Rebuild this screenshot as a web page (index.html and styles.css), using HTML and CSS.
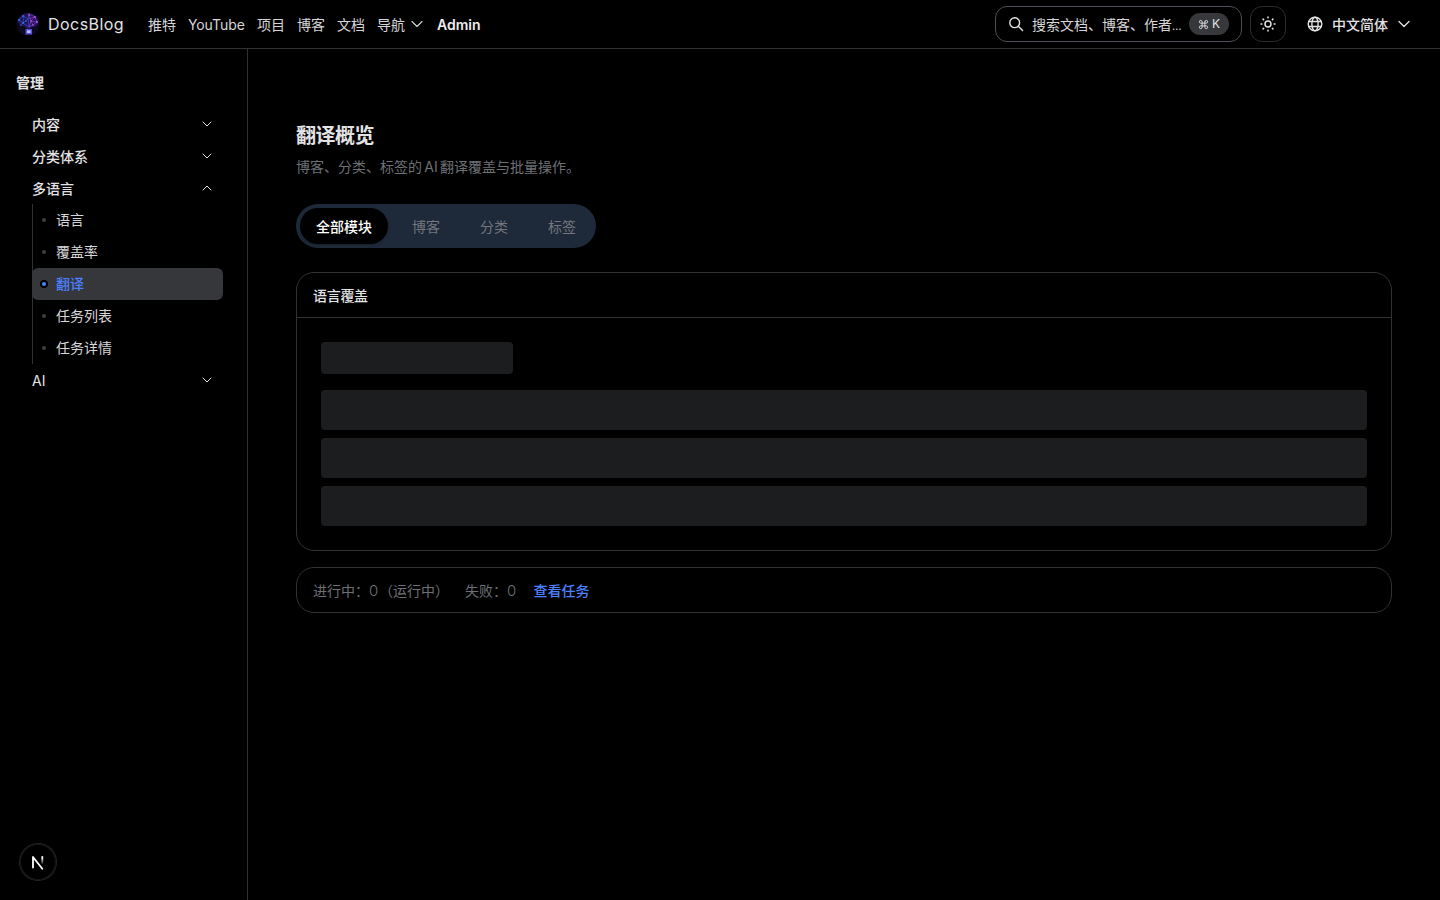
FILE: index.html
```html
<!DOCTYPE html>
<html lang="zh-CN">
<head>
  <meta charset="UTF-8">
  <title>翻译概览 - DocsBlog</title>
  <link rel="stylesheet" href="styles.css">
</head>
<body>
  <header class="navbar">
    <a class="brand">
      <svg class="logo" viewBox="0 0 24 24">
        <circle cx="12" cy="12" r="11.5" fill="#0d0a20"/>
        <path d="M2 9c0-3 3-5 5-6 2-2 5-2 6-1 3-1 6 1 7 3 2 1 3 4 2 6 0 3-3 4-5 4-2 1-3 1-4 2h-2c-1-2-2-2-4-3-3 0-5-2-5-5z" fill="#20155a"/>
        <path d="M3 8l4-4 5 3 1-5M3 8l4 3 5-4 1 8M7 11l1-7M7 11l6 4" fill="none" stroke="#2c51c8" stroke-width=".7"/>
        <path d="M13 2l6 3 2 5-4 3-4 2 2-6 6 1M12 7l7-2-4 4-2-7M15 9l2 4" fill="none" stroke="#8b3cc0" stroke-width=".7"/>
        <g fill="#3d79ec"><circle cx="3" cy="8" r=".9"/><circle cx="7" cy="4" r=".9"/><circle cx="7" cy="11" r=".9"/><circle cx="10" cy="9" r=".8"/><circle cx="5" cy="13" r=".7"/></g>
        <g fill="#c05ae6"><circle cx="13" cy="3" r=".8"/><circle cx="19" cy="5" r=".9"/><circle cx="21" cy="10" r=".9"/><circle cx="15" cy="9" r=".8"/><circle cx="17" cy="13" r=".8"/></g>
        <rect x="9.5" y="17" width="6.5" height="5.5" fill="#5350e4"/>
        <rect x="11" y="18.3" width="3.6" height="2.8" fill="#b9bcff"/>
      </svg>
      <span>DocsBlog</span>
    </a>
    <nav class="nav-links">
      <a>推特</a>
      <a class="nav-youtube">YouTube</a>
      <a>项目</a>
      <a>博客</a>
      <a>文档</a>
      <a class="nav-drop">导航
        <svg class="nav-chevron" viewBox="0 0 12 8"><path d="M1 1.5l5 5 5-5"/></svg>
      </a>
      <a class="nav-admin">Admin</a>
    </nav>
    <div class="nav-right">
      <div class="search">
        <svg class="search-icon" viewBox="0 0 16 16"><circle cx="6.7" cy="6.7" r="4.9"/><path d="M10.3 10.3l4.3 4.3"/></svg>
        <span class="search-text">搜索文档、博客、作者<span class="dots">…</span></span>
        <span class="kbd">
          <svg class="cmd" viewBox="0 0 24 24"><path d="M15 6v12a3 3 0 1 0 3-3H6a3 3 0 1 0 3 3V6a3 3 0 1 0-3 3h12a3 3 0 1 0-3-3"/></svg>K
        </span>
      </div>
      <button class="theme-button">
        <svg viewBox="0 0 16 16"><circle cx="8" cy="8" r="3"/><path d="M8 1v.8M8 14.2V15M1 8h.8M14.2 8H15M3.1 3.1l.5.5M12.4 12.4l.5.5M3.1 12.9l.5-.5M12.4 3.6l.5-.5"/></svg>
      </button>
      <div class="lang">
        <svg class="globe" viewBox="0 0 16 16"><circle cx="8" cy="8" r="6.8"/><ellipse cx="8" cy="8" rx="3.1" ry="6.8"/><path d="M1.8 5.5h12.4M1.8 10.5h12.4"/></svg>
        <span>中文简体</span>
        <svg class="nav-chevron" viewBox="0 0 12 8"><path d="M1 1.5l5 5 5-5"/></svg>
      </div>
    </div>
  </header>

  <div class="layout">
    <aside class="sidebar">
      <h2>管理</h2>
      <div class="group">内容 <svg viewBox="0 0 10 6"><path d="M1 1l4 4 4-4"/></svg></div>
      <div class="group">分类体系 <svg viewBox="0 0 10 6"><path d="M1 1l4 4 4-4"/></svg></div>
      <div class="group">多语言 <svg viewBox="0 0 10 6"><path d="M1 5l4-4 4 4"/></svg></div>
      <ul class="sub">
        <li>语言</li>
        <li>覆盖率</li>
        <li class="active">翻译</li>
        <li>任务列表</li>
        <li>任务详情</li>
      </ul>
      <div class="group group-ai">AI <svg viewBox="0 0 10 6"><path d="M1 1l4 4 4-4"/></svg></div>
    </aside>

    <main class="content">
      <h1>翻译概览</h1>
      <p class="desc">博客、分类、标签的 AI 翻译覆盖与批量操作。</p>
      <div class="tabs">
        <button class="tab tab-active">全部模块</button>
        <button class="tab">博客</button>
        <button class="tab">分类</button>
        <button class="tab">标签</button>
      </div>
      <section class="card">
        <h3>语言覆盖</h3>
        <div class="card-body">
          <div class="skeleton skeleton-title"></div>
          <div class="skeleton"></div>
          <div class="skeleton"></div>
          <div class="skeleton"></div>
        </div>
      </section>
      <section class="card status">
        <span class="running">进行中：<i>0</i>（运行中）</span>
        <span class="failed">失败：<i>0</i></span>
        <a>查看任务</a>
      </section>
    </main>
  </div>

  <div class="dev-badge">
    <svg viewBox="0 0 16 16">
      <defs>
        <linearGradient id="fade" x1="0" y1="0" x2="0" y2="1"><stop offset=".2" stop-color="#fff"/><stop offset="1" stop-color="#fff" stop-opacity="0"/></linearGradient>
      </defs>
      <path d="M3 13.5V3l9.3 11.8" fill="none" stroke="#fff" stroke-width="1.8"/>
      <rect x="11.4" y="2.2" width="1.8" height="8.5" fill="url(#fade)"/>
    </svg>
  </div>
</body>
</html>
```

FILE: styles.css
```css
* {
  box-sizing: border-box;
}

body {
  margin: 0;
  height: 100vh;
  overflow: hidden;
  background: #000;
  color: #e3e3e6;
  font-family: Inter, "Noto Sans CJK SC", sans-serif;
  font-size: 14px;
  line-height: 20px;
}

svg {
  display: block;
  fill: none;
  stroke: currentColor;
  stroke-linecap: round;
  stroke-linejoin: round;
}

button {
  font: inherit;
  border: 0;
  padding: 0;
  background: none;
  color: inherit;
}

.navbar {
  height: 49px;
  border-bottom: 1px solid #303236;
  padding: 0 30px 0 16px;
  display: flex;
  align-items: center;
}

.brand {
  display: flex;
  align-items: center;
  gap: 8px;
  width: 132px;
  font-size: 16px;
  letter-spacing: 0.45px;
}

.logo {
  width: 24px;
  height: 24px;
  stroke: none;
}

.nav-links {
  display: flex;
  gap: 12px;
  padding-top: 2px;
  color: #d6d6d9;
}

.nav-youtube {
  width: 57px;
  letter-spacing: -0.1px;
}

.nav-drop {
  display: flex;
  align-items: center;
  gap: 6px;
  width: 48px;
}

.nav-chevron {
  width: 12px;
  height: 8px;
  flex: none;
  stroke-width: 1.3;
}

.nav-drop .nav-chevron {
  stroke-width: 1.1;
  margin-top: -2px;
}

.nav-admin {
  font-weight: 600;
  color: #ececef;
}

.nav-right {
  margin-left: auto;
  display: flex;
  align-items: center;
}

.search {
  width: 247px;
  height: 36px;
  border: 1px solid #4c4f55;
  border-radius: 12px;
  padding: 0 12px;
  display: flex;
  align-items: center;
}

.search-icon {
  width: 16px;
  height: 16px;
  stroke-width: 1.4;
}

.search-text {
  width: 150px;
  margin: 2px 7px 0 8px;
  color: #d6d6d9;
  white-space: nowrap;
}

.dots {
  font-size: 11px;
}

.kbd {
  width: 40px;
  height: 22px;
  border-radius: 11px;
  background: #36383c;
  display: flex;
  align-items: center;
  justify-content: center;
  gap: 3px;
  font-size: 12px;
  flex: none;
}

.cmd {
  width: 11px;
  height: 11px;
  stroke-width: 2;
}

.theme-button {
  width: 36px;
  height: 36px;
  margin: 0 21px 0 8px;
  border: 1px solid #2a2c30;
  border-radius: 12px;
  display: flex;
  align-items: center;
  justify-content: center;
}

.theme-button svg {
  width: 16px;
  height: 16px;
  stroke-width: 1.5;
}

.lang {
  display: flex;
  align-items: center;
  font-weight: 500;
}

.lang span {
  margin: 2px 10px 0 9px;
}

.globe {
  width: 16px;
  height: 16px;
  stroke-width: 1.4;
}

.layout {
  display: flex;
  height: calc(100vh - 49px);
}

.sidebar {
  width: 248px;
  border-right: 1px solid #303236;
  padding: 24px 24px 0 16px;
  flex: none;
}

.sidebar h2 {
  margin: 0 0 16px;
  font-size: 14px;
  line-height: 20px;
  font-weight: 700;
}

.group {
  height: 32px;
  padding: 0 11px 0 16px;
  display: flex;
  align-items: center;
  justify-content: space-between;
  font-weight: 500;
}

.group svg {
  width: 10px;
  height: 6px;
  stroke-width: 1;
  margin-top: -2px;
}

.group-ai {
  font-weight: 400;
}

.sub {
  margin: -1px 0 1px 16px;
  padding: 0;
  list-style: none;
  border-left: 1px solid #303236;
  color: #d6d6d9;
}

.sub li {
  height: 32px;
  margin-left: -1px;
  padding-left: 10px;
  display: flex;
  align-items: center;
  border-radius: 6px;
}

.sub li::before {
  content: "";
  width: 4px;
  height: 4px;
  margin-right: 10px;
  border-radius: 50%;
  background: #3c3e42;
}

.sub .active {
  background: #36373b;
  color: #4d80ff;
  font-weight: 500;
}

.sub .active::before {
  background: #4d80ff;
  box-shadow: 0 0 0 2px #000;
}

.content {
  flex: 1;
  padding: 73px 48px 0;
}

.content h1 {
  margin: 0;
  font-size: 20px;
  line-height: 28px;
  font-weight: 600;
  letter-spacing: -0.5px;
}

.desc {
  margin: 7px 0 27px;
  color: #6e7076;
  word-spacing: -1.6px;
}

.tabs {
  width: 300px;
  height: 44px;
  border-radius: 22px;
  padding: 4px;
  background: #1e2939;
  display: flex;
  gap: 8px;
}

.tab {
  height: 36px;
  padding: 2px 16px 0;
  border-radius: 18px;
  color: #74767c;
  white-space: nowrap;
}

.tab-active {
  background: #000;
  color: #fff;
  font-weight: 500;
  box-shadow: 0 1px 2px rgba(0, 0, 0, 0.3);
}

.card {
  margin-top: 24px;
  border: 1px solid #303236;
  border-radius: 18px;
}

.card h3 {
  margin: 0;
  padding: 13px 16px 11px;
  border-bottom: 1px solid #303236;
  font-size: 14px;
  line-height: 20px;
  font-weight: 500;
  letter-spacing: -0.3px;
}

.card-body {
  padding: 24px;
  display: flex;
  flex-direction: column;
  gap: 8px;
}

.skeleton {
  height: 40px;
  border-radius: 4px;
  background: #1c1d1f;
}

.skeleton-title {
  width: 192px;
  height: 32px;
  margin-bottom: 8px;
}

.status {
  height: 46px;
  margin-top: 16px;
  padding: 2px 16px 0;
  display: flex;
  align-items: center;
  color: #6e7076;
}

.status i {
  display: inline-block;
  width: 10px;
  font-style: normal;
  font-size: 15px;
  font-weight: 300;
}

.running {
  width: 152px;
}

.failed {
  width: 68.5px;
}

.status a {
  color: #4d80ff;
  font-weight: 500;
}

.dev-badge {
  position: fixed;
  left: 20px;
  bottom: 20px;
  width: 36px;
  height: 36px;
  border-radius: 50%;
  background: #000;
  box-shadow: 0 0 0 1px #242424, inset 0 0 0 1px #171717;
  display: flex;
  align-items: center;
  justify-content: center;
}

.dev-badge svg {
  width: 16px;
  height: 16px;
  stroke: none;
}
```
